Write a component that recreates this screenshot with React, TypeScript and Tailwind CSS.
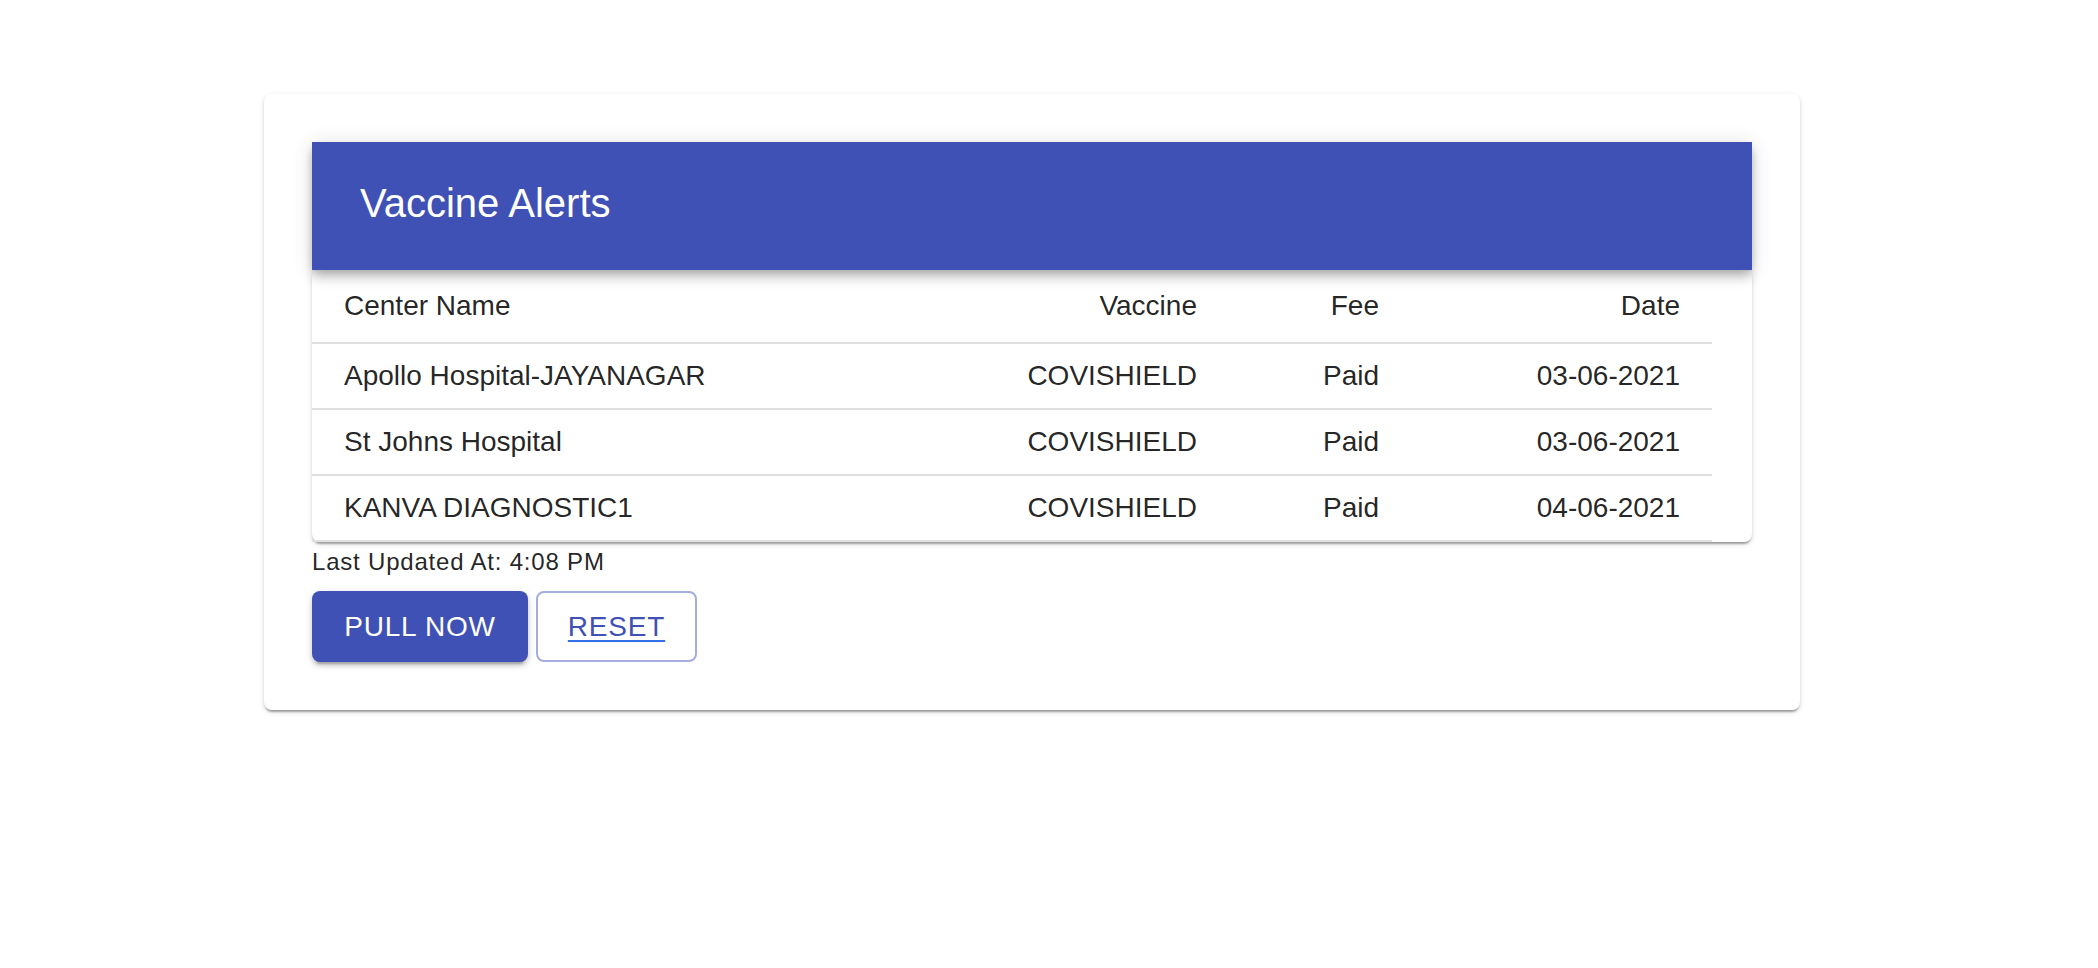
const rows = [
  { center: "Apollo Hospital-JAYANAGAR", vaccine: "COVISHIELD", fee: "Paid", date: "03-06-2021" },
  { center: "St Johns Hospital", vaccine: "COVISHIELD", fee: "Paid", date: "03-06-2021" },
  { center: "KANVA DIAGNOSTIC1", vaccine: "COVISHIELD", fee: "Paid", date: "04-06-2021" },
];

const App = () => {
  return (
    <div className="min-h-screen bg-white font-['Liberation_Sans',Arial,sans-serif] text-[rgba(0,0,0,0.87)]">
      <div className="ml-[264px] pt-[94px]">
        <div className="w-[1536px] rounded-[8px] bg-white p-[48px] shadow-[0_4px_2px_-2px_rgba(0,0,0,0.2),0_2px_2px_0_rgba(0,0,0,0.14),0_2px_6px_0_rgba(0,0,0,0.12)]">
          <div className="w-[1440px]">
            <div className="relative z-10 flex h-[128px] items-center bg-[#3f51b5] pl-[48px] shadow-[0_4px_8px_-2px_rgba(0,0,0,0.2),0_8px_10px_0_rgba(0,0,0,0.14),0_2px_20px_0_rgba(0,0,0,0.12)]">
              <h1 className="pb-[6px] text-[40px] font-normal leading-none text-white">
                Vaccine Alerts
              </h1>
            </div>
            <div className="rounded-[8px] bg-white shadow-[0_4px_2px_-2px_rgba(0,0,0,0.2),0_2px_2px_0_rgba(0,0,0,0.14),0_2px_6px_0_rgba(0,0,0,0.12)]">
              <table className="w-[1400px] table-fixed border-collapse text-[28px]">
                <colgroup>
                  <col className="w-[630px]" />
                  <col className="w-[287px]" />
                  <col className="w-[182px]" />
                  <col className="w-[301px]" />
                </colgroup>
                <thead>
                  <tr className="h-[73px] border-b-2 border-[#e0e0e0] [&>th]:px-[32px] [&>th]:font-normal">
                    <th className="text-left">Center Name</th>
                    <th className="text-right">Vaccine</th>
                    <th className="text-right">Fee</th>
                    <th className="text-right">Date</th>
                  </tr>
                </thead>
                <tbody>
                  {rows.map((row, index) => (
                    <tr
                      key={`row-${index}`}
                      className="h-[66px] border-b-2 border-[#e0e0e0] [&>td]:px-[32px]"
                    >
                      <td className="text-left">{row.center}</td>
                      <td className="text-right">{row.vaccine}</td>
                      <td className="text-right">{row.fee}</td>
                      <td className="text-right">{row.date}</td>
                    </tr>
                  ))}
                </tbody>
              </table>
            </div>
            <p className="text-[24px] leading-[40px] tracking-[0.8px]">
              Last Updated At: 4:08 PM
            </p>
            <div className="mt-[9px] flex gap-[8px]">
              <button className="h-[71px] w-[216px] rounded-[8px] bg-[#3f51b5] text-[28px] tracking-[0.8px] text-white shadow-[0_6px_2px_-4px_rgba(0,0,0,0.2),0_4px_4px_0_rgba(0,0,0,0.14),0_2px_10px_0_rgba(0,0,0,0.12)]">
                PULL NOW
              </button>
              <button className="h-[71px] w-[161px] rounded-[8px] border-2 border-[#a5addc] bg-white text-[28px] tracking-[0.8px] text-[#3f51b5] underline decoration-[#3470e8] decoration-2 underline-offset-[4px]">
                RESET
              </button>
            </div>
          </div>
        </div>
      </div>
    </div>
  );
};

export default App;
